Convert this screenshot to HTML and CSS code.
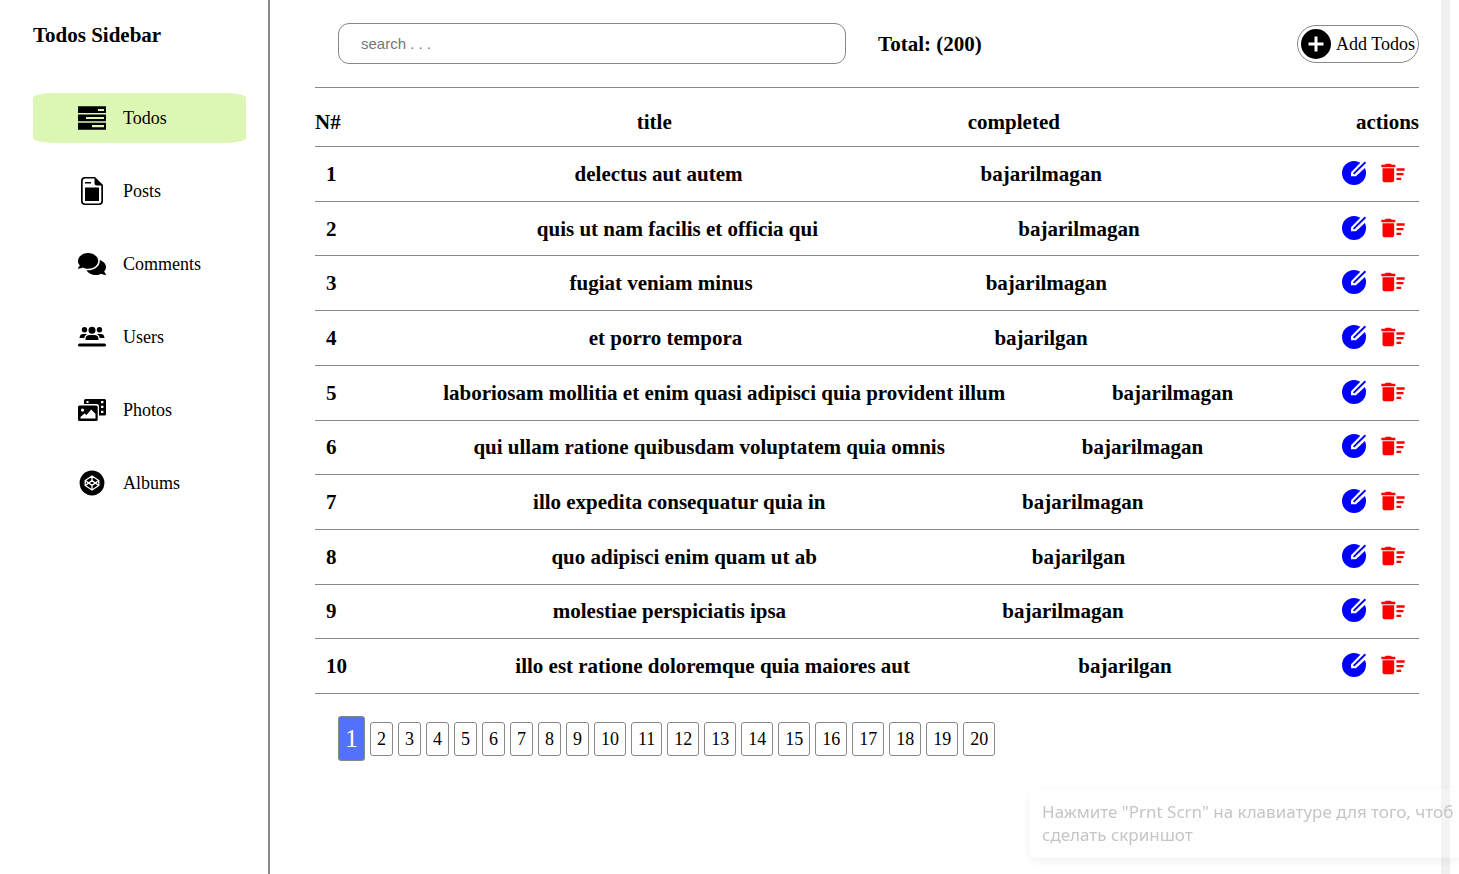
FILE: index.html
```html
<!DOCTYPE html>
<html lang="en">
<head>
<meta charset="utf-8">
<title>Todos</title>
<link rel="stylesheet" href="styles.css">
</head>
<body>
<svg class="sprite" aria-hidden="true">
  <symbol id="edit" viewBox="0 0 28 28">
    <circle cx="14" cy="14" r="12" fill="currentColor"/>
    <path fill="#fff" d="M11 17.300V13.300L21.800 2.200 27 7 16 17.300Z"/>
    <path fill="none" stroke="currentColor" stroke-width="1.900" d="M13.600 14.900 25.400 3.300"/>
  </symbol>
  <symbol id="sweep" viewBox="0 0 24 24">
    <path fill="currentColor" d="M15 16h4v2h-4zm0-8h7v2h-7zm0 4h6v2h-6zM3 18c0 1.1.9 2 2 2h6c1.1 0 2-.9 2-2V8H3v10zM14 5h-3l-1-1H6L5 5H2v2h12z"/>
  </symbol>
</svg>
<div class="app">
  <aside class="sidebar">
    <h1 class="brand">Todos Sidebar</h1>
    <nav class="menu">
      <a class="menu-link active" href="#todos"><svg class="icon" viewBox="0 0 28 28"><path fill-rule="evenodd" d="M0 2.200H28V9H0ZM20 4.900V7H26V4.900ZM0 10.600H28V17.200H0ZM8 12.900V15H26V12.900ZM0 18.800H28V25.700H0ZM14 21V23.200H26V21Z"/></svg>Todos</a>
      <a class="menu-link" href="#posts"><svg class="icon" viewBox="0 0 28 28"><path fill-rule="evenodd" d="M7 0H17L25 8V24Q25 28 21 28H7Q3 28 3 24V4Q3 0 7 0ZM7 1.500Q4.700 1.500 4.700 4V24Q4.700 26.400 7 26.400H21Q23.300 26.400 23.300 24V8.500H19Q16.500 8.500 16.500 6V1.500ZM7 5H13V6.600H7ZM7 10.400H21V24H7Z"/></svg>Posts</a>
      <a class="menu-link" href="#comments"><svg class="icon" viewBox="0 0 576 512"><path d="M416 192c0-88.4-93.1-160-208-160S0 103.6 0 192c0 34.3 14.1 65.9 38 92-13.4 30.2-35.5 54.2-35.8 54.5-2.2 2.3-2.8 5.700-1.5 8.700S4.800 352 8 352c36.600 0 66.900-12.300 88.700-25 32.200 15.700 70.300 25 111.300 25 114.900 0 208-71.600 208-160zm122 220c23.900-26 38-57.700 38-92 0-66.900-53.500-124.200-129.300-148.100.9 6.600 1.300 13.300 1.300 20.100 0 105.900-107.700 192-240 192-10.800 0-21.300-.8-31.700-1.900C207.800 439.600 281.800 480 368 480c41 0 79.100-9.200 111.300-25 21.800 12.700 52.100 25 88.700 25 3.200 0 6.100-1.900 7.300-4.800 1.300-2.900.7-6.300-1.500-8.700-.3-.3-22.400-24.200-35.800-54.500z"/></svg>Comments</a>
      <a class="menu-link" href="#users"><svg class="icon" viewBox="0 0 28 28"><circle cx="6.500" cy="6.800" r="2.700"/><circle cx="21.500" cy="6.800" r="2.700"/><circle cx="14" cy="7.200" r="3.500"/><path d="M7.500 16.200Q7.500 12 12 12H16Q20.500 12 20.500 16.200V17H7.500ZM1.500 15Q1.800 11 5 11H9Q6.500 12.500 6.200 15ZM26.500 15Q26.200 11 23 11H19Q21.500 12.500 21.800 15Z"/><rect y="20.500" width="28" height="3" rx="1.500"/></svg>Users</a>
      <a class="menu-link" href="#photos"><svg class="icon" viewBox="0 0 28 28"><path fill-rule="evenodd" d="M7.500 3H26.500Q28 3 28 4.500V18Q28 19.500 26.500 19.500H21V10.500Q21 8 18.500 8H6V4.500Q6 3 7.500 3ZM8.500 5V7H10.500V5ZM23 5V7.200H25.400V5ZM23 9.800V12H25.400V9.800ZM23 14.700V17H25.400V14.700ZM1.500 9.500H18.200Q19.700 9.500 19.700 11V23.500Q19.700 25 18.200 25H1.500Q0 25 0 23.500V11Q0 9.500 1.500 9.500ZM4.500 12.500A1.600 1.600 0 1 0 4.500 15.700 1.600 1.600 0 1 0 4.500 12.500ZM2.500 22.500H17.500V18L13.200 13.500 8.500 19 6.500 17.500 2.500 21Z"/></svg>Photos</a>
      <a class="menu-link" href="#albums"><svg class="icon" viewBox="0 0 28 28"><circle cx="14" cy="14" r="12.400"/><path fill="none" stroke="#fff" stroke-width="1.300" stroke-linejoin="round" d="M14 7 20.800 11.500V16.500L14 21 7.200 16.500V11.500ZM14 7V11.600M14 16.400V21M7.200 11.500 14 16.400 20.800 11.500M7.200 16.500 14 11.600 20.800 16.500"/></svg>Albums</a>
    </nav>
  </aside>
  <main class="content">
    <header class="toolbar">
      <input class="search" type="text" placeholder="search . . ." aria-label="search">
      <h2 class="total">Total: (200)</h2>
      <button class="add" type="button"><svg class="add-icon" viewBox="0 0 30 30"><circle cx="15" cy="15" r="15"/><path stroke="#fff" stroke-width="3" d="M7.500 15H22.500M15 7.500V22.500"/></svg>Add Todos</button>
    </header>
    <table class="todos">
      <thead>
        <tr class="row head"><th>N#</th><th>title</th><th>completed</th><th>actions</th></tr>
      </thead>
      <tbody id="rows"></tbody>
    </table>
    <nav class="pages" id="pages" aria-label="Pages"></nav>
  </main>
  <div class="track"></div>
</div>
<div class="toast" role="status">Нажмите "Prnt Scrn" на клавиатуре для того, чтоб<br>сделать скриншот</div>
<script src="app.js"></script>
</body>
</html>
```
FILE: app.js
```js
const todos = [
  ["delectus aut autem", false],
  ["quis ut nam facilis et officia qui", false],
  ["fugiat veniam minus", false],
  ["et porro tempora", true],
  ["laboriosam mollitia et enim quasi adipisci quia provident illum", false],
  ["qui ullam ratione quibusdam voluptatem quia omnis", false],
  ["illo expedita consequatur quia in", false],
  ["quo adipisci enim quam ut ab", true],
  ["molestiae perspiciatis ipsa", false],
  ["illo est ratione doloremque quia maiores aut", true]
];
document.getElementById("rows").innerHTML = todos.map(([title, done], i) => `
  <tr class="row">
    <td>${i + 1}</td><td>${title}</td><td>${done ? "bajarilgan" : "bajarilmagan"}</td>
    <td class="actions">
      <button class="action edit" type="button" aria-label="Edit"><svg class="icon"><use href="#edit"/></svg></button>
      <button class="action delete" type="button" aria-label="Delete"><svg class="icon"><use href="#sweep"/></svg></button>
    </td>
  </tr>`).join("");
document.getElementById("pages").innerHTML = Array.from({ length: 20 }, (_, i) =>
  `<button class="page${i === 0 ? " current" : ""}" type="button">${i + 1}</button>`).join("");
```
FILE: styles.css
```css
* { box-sizing: border-box; margin: 0; padding: 0; }
body {
  font-family: "Liberation Serif", serif;
  font-size: 18px;
  line-height: 20px;
  color: #000;
  background: #fff;
  overflow: hidden;
}
button { font: inherit; color: inherit; background: none; cursor: pointer; }
.sprite { display: none; }
.icon { display: block; width: 28px; height: 28px; flex: none; }

.app { display: flex; min-height: 100vh; padding-right: 9px; }
.sidebar {
  width: 270px;
  flex: none;
  padding: 23px 22px 0 33px;
  border-right: 2px solid #888;
}
.brand { font-size: 21px; line-height: 24px; }
.menu { display: flex; flex-direction: column; gap: 23px; margin-top: 46px; }
.menu-link {
  display: flex;
  align-items: center;
  gap: 17px;
  height: 50px;
  padding-left: 45px;
  border-radius: 10%;
  color: #000;
  text-decoration: none;
}
.menu-link.active { background: #dcf7b3; }

.content { flex: 1; min-width: 0; padding: 0 22px 0 45px; }
.toolbar {
  display: flex;
  align-items: center;
  padding: 23px 0 23px 23px;
  border-bottom: 1px solid #888;
}
.search {
  width: 47%;
  height: 41px;
  padding: 0 22px;
  border: 1px solid #888;
  border-radius: 11px;
  font-family: "Liberation Sans", sans-serif;
  font-size: 15px;
}
.search::placeholder { color: #757575; }
.total { margin-left: 32px; font-size: 21px; line-height: 24px; }
.add {
  display: flex;
  align-items: center;
  gap: 5px;
  height: 38px;
  margin-left: auto;
  padding: 0 3px;
  border: 1px solid #888;
  border-radius: 19px;
}
.add-icon { width: 30px; height: 30px; }

.todos { display: block; font-size: 21px; line-height: 24px; font-weight: bold; }
.todos thead { display: block; }
.todos tbody { display: grid; grid-auto-rows: 1fr; min-height: 547px; }
.row {
  display: flex;
  justify-content: space-between;
  align-items: center;
  padding: 0 12px 0 11px;
  border-bottom: 1px solid #888;
}
.row.head { padding: 22px 0 12px; }
.actions { display: flex; gap: 11px; padding-bottom: 2px; }
.action { border: 0; }
.edit { color: #00f; }
.delete { color: #f00; }

.pages { display: flex; align-items: center; gap: 5px; padding: 22px 0 0 23px; }
.page { padding: 6px; border: 1px solid #888; border-radius: 3px; }
.page.current { font-size: 26px; line-height: 31px; color: #fff; background: #5271ff; }

.track { width: 9px; background: #f0f0f0; }
.toast {
  position: fixed;
  left: 1029px;
  right: 0;
  bottom: 16px;
  padding: 12px 0 12px 13px;
  border-radius: 6px 0 0 6px;
  background: rgba(253, 253, 253, 0.3);
  box-shadow: 0 3px 8px rgba(0, 0, 0, 0.06);
  font-family: "Noto Sans", "Open Sans", sans-serif;
  font-size: 17px;
  line-height: 23px;
  color: #c6c6c6;
  white-space: nowrap;
}
```
